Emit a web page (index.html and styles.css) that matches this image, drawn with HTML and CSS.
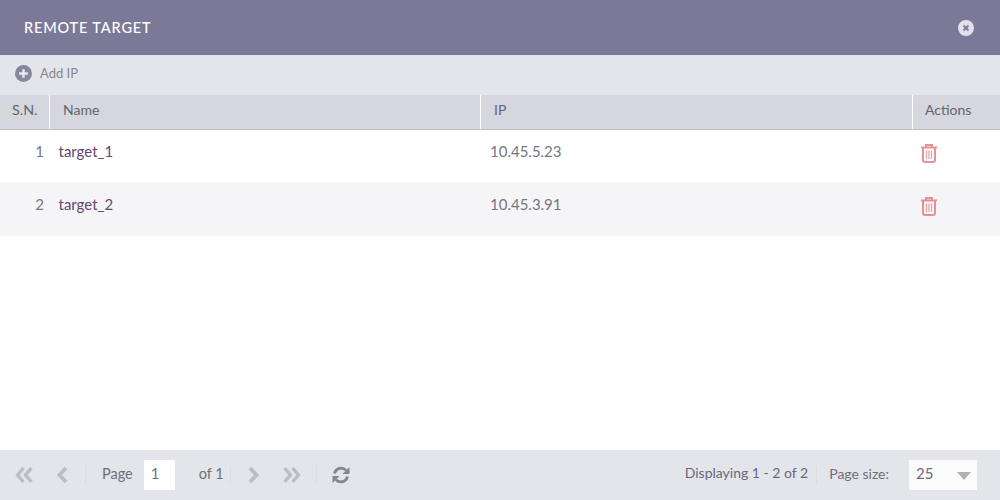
FILE: index.html
```html
<!DOCTYPE html>
<html lang="en">
<head>
<meta charset="utf-8">
<title>Remote Target</title>
<link rel="stylesheet" href="styles.css">
</head>
<body>
<div class="dialog">
  <header class="title-bar">
    <h1 class="title">REMOTE TARGET</h1>
    <svg class="close" viewBox="0 0 16 16" width="16" height="16"><circle cx="8" cy="8" r="8" fill="#e2e1e9"/><path d="M5.500 5.500l5 5M10.500 5.500l-5 5" stroke="#7c7897" stroke-width="1.800"/></svg>
  </header>
  <div class="toolbar">
    <svg class="add-icon" viewBox="0 0 17 17" width="17" height="17"><circle cx="8.500" cy="8.500" r="8.500" fill="#85889f"/><path d="M8.500 4.200v8.600M4.200 8.500h8.600" stroke="#e9eaee" stroke-width="2.400"/></svg>
    <span class="add-label">Add IP</span>
  </div>
  <div class="grid-head row-grid">
    <div class="hcell hsn">S.N.</div>
    <div class="hcell hname">Name</div>
    <div class="hcell hip">IP</div>
    <div class="hcell hact">Actions</div>
  </div>
  <div class="grid-row row-grid">
    <div class="sn">1</div>
    <div class="name">target_1</div>
    <div class="ip">10.45.5.23</div>
    <div class="act">
      <svg class="trash" viewBox="0 0 18 20" width="18" height="20"><path d="M1 4.500h16M6 4.500V2h6v2.500M3 4.500V17a2 2 0 0 0 2 2h8a2 2 0 0 0 2-2V4.500" fill="none" stroke="#e59196" stroke-width="2"/><path d="M6.500 7.500v8.500M9 7.500v8.500M11.500 7.500v8.500" stroke="#e9a5a9" stroke-width="1.300"/></svg>
    </div>
  </div>
  <div class="grid-row alt row-grid">
    <div class="sn">2</div>
    <div class="name">target_2</div>
    <div class="ip">10.45.3.91</div>
    <div class="act">
      <svg class="trash" viewBox="0 0 18 20" width="18" height="20"><path d="M1 4.500h16M6 4.500V2h6v2.500M3 4.500V17a2 2 0 0 0 2 2h8a2 2 0 0 0 2-2V4.500" fill="none" stroke="#e59196" stroke-width="2"/><path d="M6.500 7.500v8.500M9 7.500v8.500M11.500 7.500v8.500" stroke="#e9a5a9" stroke-width="1.300"/></svg>
    </div>
  </div>
  <div class="spacer"></div>
  <footer class="pager">
    <svg class="pg first" viewBox="0 0 20 18" width="20" height="18"><path d="M9.500 2L3.500 9l6 7M17.500 2l-6 7 6 7" fill="none" stroke="#bcbdc2" stroke-width="3.400"/></svg>
    <svg class="pg prev" viewBox="0 0 12 18" width="12" height="18"><path d="M10 2L3.500 9l6.500 7" fill="none" stroke="#bcbdc2" stroke-width="3.800"/></svg>
    <span class="sep sep1"></span>
    <span class="lbl page-lbl">Page</span>
    <span class="page-input">1</span>
    <span class="lbl of-lbl">of 1</span>
    <span class="sep sep2"></span>
    <svg class="pg next" viewBox="0 0 12 18" width="12" height="18"><path d="M2 2l6.500 7L2 16" fill="none" stroke="#bcbdc2" stroke-width="3.800"/></svg>
    <svg class="pg last" viewBox="0 0 20 18" width="20" height="18"><path d="M2.500 2l6 7-6 7M10.500 2l6 7-6 7" fill="none" stroke="#bcbdc2" stroke-width="3.400"/></svg>
    <span class="sep sep3"></span>
    <svg class="pg refresh" viewBox="0 0 18 18" width="18" height="18"><path d="M2.500 7.500A6.800 6.800 0 0 1 14 4.200" fill="none" stroke="#85868b" stroke-width="2.800"/><path d="M17.500 1v7h-7z" fill="#85868b"/><path d="M15.500 10.500A6.800 6.800 0 0 1 4 13.800" fill="none" stroke="#85868b" stroke-width="2.800"/><path d="M.5 17v-7h7z" fill="#85868b"/></svg>
    <span class="lbl display">Displaying 1 - 2 of 2</span>
    <span class="sep sep4"></span>
    <span class="lbl size-lbl">Page size:</span>
    <div class="size-box"><span>25</span><i class="caret"></i></div>
  </footer>
</div>
</body>
</html>
```
FILE: styles.css
```css
* { box-sizing: border-box; }
html, body { margin: 0; height: 100%; }
body { font-family: Lato, "Open Sans", sans-serif; font-size: 14px; color: #6f6f78; background: #fff; }
.dialog { width: 1000px; height: 500px; display: flex; flex-direction: column; }
.title-bar { height: 55px; flex: none; background: #7c7897; display: flex; align-items: center; justify-content: space-between; padding: 0 26px 0 24px; }
.title { margin: 0; font-size: 14.5px; font-weight: 500; letter-spacing: 0.85px; color: #fff; }
.toolbar { height: 40px; flex: none; background: #e4e5ea; display: flex; align-items: center; padding: 0 0 4px 15px; gap: 8px; }
.add-label { font-size: 13px; color: #85858c; }
.row-grid { display: grid; grid-template-columns: 49px 431px 432px 88px; }
.grid-head { height: 35px; flex: none; background: #d5d6de; border-bottom: 1px solid #bdbdc4; }
.hcell { display: flex; align-items: center; border-left: 1px solid #fff; color: #64646e; padding-bottom: 6px; }
.hsn { border-left: 0; padding-left: 12px; font-size: 14.3px; }
.hname { padding-left: 13px; }
.hip { padding-left: 13px; }
.hact { padding-left: 12px; }
.grid-row { height: 52px; flex: none; background: #fff; }
.grid-row.alt { height: 54px; background: #f5f5f8; }
.grid-row > div { padding-top: 12px; font-size: 15px; }
.grid-row.alt > div { padding-top: 13px; }
.sn { text-align: right; padding-right: 5px; color: #77777f; }
.name { padding-left: 9.5px; color: #66486f; }
.ip { padding-left: 10px; color: #77777f; }
.act { padding-left: 8px; }
.grid-row > .act { padding-top: 13px; }
.grid-row.alt > .act { padding-top: 14px; }
.trash { display: block; }
.spacer { flex: 1; }
.pager { height: 50px; flex: none; background: #e4e5ea; display: flex; align-items: center; padding-left: 14px; }
.pg { flex: none; }
.lbl { font-size: 14.5px; position: relative; top: -2px; }
.prev { margin-left: 22px; }
.sep { width: 1px; height: 18px; background: #dcdde2; flex: none; }
.sep1 { margin-left: 17px; }
.page-lbl { margin-left: 16px; }
.page-input { width: 31px; height: 30px; background: #fff; margin-left: 11px; padding-left: 7px; line-height: 26px; font-size: 15px; }
.of-lbl { margin-left: 24px; }
.sep2 { margin-left: 6px; }
.next { margin-left: 17px; }
.last { margin-left: 22px; }
.sep3 { margin-left: 14px; }
.refresh { margin-left: 15px; }
.display { margin-left: auto; color: #686878; font-size: 14px; top: -3px; }
.sep4 { margin-left: 8px; }
.size-lbl { margin-left: 12px; font-size: 14px; top: -2px; }
.size-box { width: 68px; height: 30px; background: #fbfbfc; margin: 0 23px 0 20px; display: flex; align-items: center; justify-content: space-between; padding: 0 6px 5px 7px; font-size: 15px; color: #6a6a7a; }
.caret { width: 0; height: 0; border-left: 7.500px solid transparent; border-right: 7.500px solid transparent; border-top: 8px solid #b0b0b5; margin-top: 7px; }
```
